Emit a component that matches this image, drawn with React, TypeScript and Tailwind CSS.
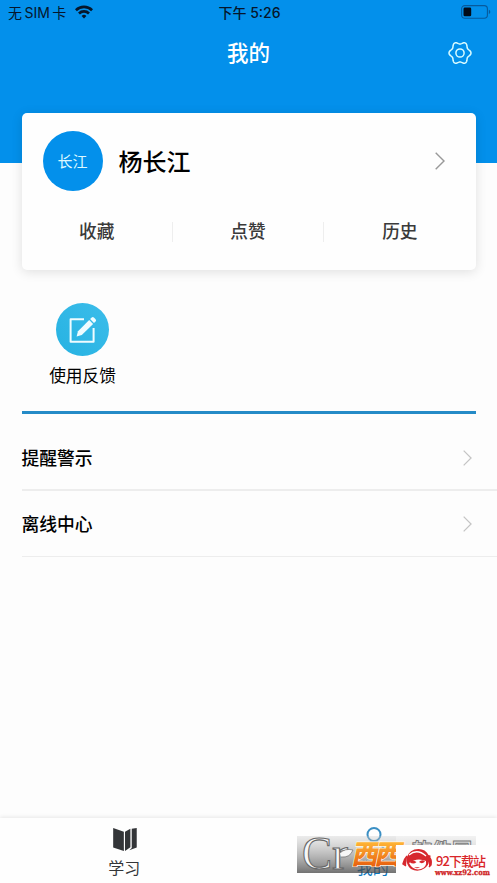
import type { ReactNode } from 'react'

const stats = ['收藏', '点赞', '历史']
const menu = ['提醒警示', '离线中心']

// six soft lobes round the centre of a 24px box
const gearPoints = Array.from({ length: 72 }, (_, i) => {
  const a = (i * Math.PI) / 36
  const r = 9.8 + 1.2 * Math.cos(6 * a)
  return `${(12 + r * Math.cos(a)).toFixed(2)},${(12 + r * Math.sin(a) * 1.04).toFixed(2)}`
}).join(' ')

function Chevron({ className }: { className: string }) {
  return (
    <svg viewBox="0 0 10 18" fill="none" stroke="currentColor" strokeWidth="1.4" className={className}>
      <path d="M0.7 0.7 9 9 0.7 17.3" />
    </svg>
  )
}

function WifiIcon() {
  return (
    <svg viewBox="0 0 18 14" className="ml-[9px] h-3.5 w-[18px]" fill="none" stroke="#06162b" strokeWidth="2.7">
      <path d="M0.9 5.2a11.5 11.5 0 0 1 16.2 0" />
      <path d="M4 8.5a7.1 7.1 0 0 1 10 0" />
      <path d="M9 13.4 6.6 11a3.4 3.4 0 0 1 4.8 0z" fill="#06162b" stroke="none" />
    </svg>
  )
}

function BatteryIcon() {
  return (
    <svg viewBox="0 0 30 14" className="h-3.5 w-[30px]">
      <rect x="0.6" y="0.6" width="25.8" height="12.6" rx="3.2" fill="none" stroke="#075a9c" strokeWidth="1.1" />
      <rect x="2.5" y="2.5" width="7.7" height="8.8" rx="1.4" fill="#020b18" />
      <path d="M27.8 4.8q1.5 .6 1.5 2.1t-1.5 2.1z" fill="#075a9c" />
    </svg>
  )
}

function GearIcon() {
  return (
    <svg viewBox="0 0 24 24" className="size-6" fill="none" stroke="#d9fbff" strokeWidth="1.5" strokeLinejoin="round">
      <polygon points={gearPoints} />
      <circle cx="12" cy="12" r="4.1" />
    </svg>
  )
}

function EditIcon() {
  return (
    <svg viewBox="0 0 28 28" className="size-7" fill="none" stroke="#effcff">
      <path d="M15 3.2H1.6v22.6H24.6V12" strokeWidth="2" strokeLinejoin="round" />
      <path d="M7.6 20.4 9 15.2 20.2 4l3.9 3.9-11.3 11.2z" fill="#effcff" stroke="none" />
      <path d="M21.1 3.1 22.7 1.5q1-1 2.2 0l1.7 1.7q1 1.2 0 2.2L25 7z" fill="#effcff" stroke="none" />
    </svg>
  )
}

function BookIcon() {
  return (
    <svg viewBox="0 0 26 26" className="ml-0.5 h-[25px] w-[26px]" fill="#333538">
      <path d="M0.7 1 11.8 5v20L0.7 21.2z" />
      <path d="M13 5 18.6 1.7V21L13 25z" />
      <path d="M20 1.8 25.2 1v20.2l-7.8 2.9L20 21.8z" />
    </svg>
  )
}

function Tab({ label, children, active }: { label: string; children: ReactNode; active?: boolean }) {
  return (
    <div className={active ? 'flex flex-1 flex-col items-center text-[#0b76bd]' : 'flex flex-1 flex-col items-center text-[#333538]'}>
      <div className="flex h-8 items-end">{children}</div>
      <span className="mt-1 text-base leading-6">{label}</span>
    </div>
  )
}

function SiteBadge() {
  return (
    <svg
      viewBox="0 0 200 50"
      className="absolute right-0 bottom-0 h-[50px] w-[200px] overflow-visible"
      fontFamily="'Noto Sans CJK SC', sans-serif"
    >
      <defs>
        <linearGradient id="grey" x1="0" y1="0" x2="0" y2="1">
          <stop offset="0" stopColor="#c8c8c8" stopOpacity="0.35" />
          <stop offset="1" stopColor="#3c3c3c" stopOpacity="0.72" />
        </linearGradient>
        <linearGradient id="orange" gradientUnits="userSpaceOnUse" x1="0" y1="-22" x2="0" y2="2">
          <stop offset="0" stopColor="#ffb636" />
          <stop offset="1" stopColor="#e8600f" />
        </linearGradient>
      </defs>
      <rect x="0" y="3" width="99" height="37" fill="url(#grey)" />
      <rect x="99" y="3" width="80" height="37" fill="url(#grey)" opacity="0.65" />
      <g fontFamily="'Liberation Serif', serif" fill="#f7f7f7" stroke="#686868" strokeWidth="1.1">
        <text x="5" y="35.5" fontSize="47" textLength="30" lengthAdjust="spacingAndGlyphs">C</text>
        <text x="35" y="35.5" fontSize="46" textLength="16" lengthAdjust="spacingAndGlyphs">r</text>
      </g>
      <path d="M43 20q5-5 13-3-3 8-12 7" fill="#f7f7f7" stroke="#686868" strokeWidth="0.7" />
      <g transform="translate(54 31) skewX(-12)" fontSize="27" fontWeight="900">
        <text x="0" y="0" fill="url(#orange)" stroke="#fff6e4" strokeWidth="1.3" paintOrder="stroke" textLength="50">西西</text>
      </g>
      <text x="115" y="24.5" fontSize="20" fontWeight="700" fill="#e4e4e4" stroke="#777" strokeWidth="0.9" textLength="60">软件园</text>
      <rect x="99" y="12" width="101" height="38" fill="#fffefe" />
      <g fill="#d7282e">
        <path d="M109.5 25q3-9 12-9 7 0 10 6l2 .5v2l-1.5.5q1 6-4 10-7 5-14 1-5-4-4.5-11z" />
        <path d="M110 23q-3 3-4 8l3 2M132 24q3 2 2 8l-2 2" stroke="#d7282e" strokeWidth="1.5" />
      </g>
      <path d="M112 30q8-6 17-2 1 6-5 8-8 2-12-6z" fill="#fff" />
      <path d="M112.5 29q3-3 7 0-3 3-7 0zM122 29q3-3 6-.5-3 3-6 .5zM117 34.5q4 1.5 6-.5" fill="#d7282e" />
      <path d="M112 22q8-7 17 1" fill="none" stroke="#fff" strokeWidth="1.3" />
      <text x="139" y="32.5" fontSize="13" fontWeight="500" fill="#d92529" textLength="50">92下载站</text>
      <text x="138" y="42" fontFamily="'DejaVu Serif', serif" fontSize="7.5" fontWeight="700" fill="#cf1f24" stroke="#cf1f24" strokeWidth="0.3" textLength="55" lengthAdjust="spacingAndGlyphs">www.xz92.com</text>
    </svg>
  )
}

export default function App() {
  return (
    <div className="relative flex h-[883px] w-[497px] flex-col overflow-hidden bg-[#fdfdfd] font-['Inter','Noto_Sans_CJK_SC',sans-serif] text-black">
      <header className="h-[163px] shrink-0 bg-[#0390eb]">
        <div className="grid h-6 grid-cols-3 items-center pr-1.5 pl-2 text-[14px] text-[#06162b]">
          <div className="flex items-center">
            <span className="text-[14px] [word-spacing:-1.5px]">无 SIM 卡</span>
            <WifiIcon />
          </div>
          <div className="text-center font-medium">下午 5:26</div>
          <div className="flex justify-end">
            <BatteryIcon />
          </div>
        </div>
        <div className="grid h-[58px] grid-cols-3 items-center pr-[25px] pl-[25px]">
          <h1 className="col-start-2 text-center text-[21.5px] font-medium text-white">我的</h1>
          <div className="flex justify-end">
            <GearIcon />
          </div>
        </div>
      </header>

      <section className="z-10 mx-[21.5px] -mt-[50px] h-[157px] shrink-0 rounded-[5px] bg-[#fefefe] shadow-[0_2px_12px_rgba(0,0,0,0.12)]">
        <div className="flex items-center pt-[18px] pr-[31px] pl-[21px]">
          <div className="flex size-[60px] items-center justify-center rounded-full bg-[#0390eb] pt-0.5 text-[15px] text-[#dcf8ff]">
            长江
          </div>
          <h2 className="ml-4 flex-1 pt-[3px] text-[24px] font-medium">杨长江</h2>
          <Chevron className="h-[18px] w-2.5 text-[#999]" />
        </div>
        <div className="mt-[27px] grid grid-cols-3 text-center text-[17.7px] leading-[28px] font-medium text-[#3a3a3a]">
          {stats.map((label, i) => (
            <div key={label} className="flex items-center">
              <span className="flex-1">{label}</span>
              {i < 2 && <span className="h-5 w-px bg-[#eeeeee]" />}
            </div>
          ))}
        </div>
      </section>

      <section className="mx-[21.5px] flex h-[144px] shrink-0 items-start border-b-3 border-[#258bc7] pt-[33px]">
        <div className="flex w-[122px] flex-col items-center">
          <div className="flex size-[53px] items-center justify-center rounded-full bg-linear-to-tr from-[#25b2e2] to-[#3bbdea]">
            <EditIcon />
          </div>
          <span className="mt-[7px] text-[16.7px] leading-[26px]">使用反馈</span>
        </div>
      </section>

      <ul className="pl-[21.5px]">
        {menu.map((label) => (
          <li
            key={label}
            className="flex h-[66px] items-center justify-between border-b border-[#ededed] pr-[25px] first:h-[77px] first:border-b-2 first:pt-3"
          >
            <span className="pt-[3px] text-[17.8px] font-medium">{label}</span>
            <Chevron className="h-4 w-[9px] text-[#c4c4c4]" />
          </li>
        ))}
      </ul>

      <nav className="mt-auto flex h-[65px] shrink-0 bg-[#fefefe] pt-0.5 shadow-[0_-1px_4px_rgba(0,0,0,0.09)]">
        <Tab label="学习">
          <BookIcon />
        </Tab>
        <Tab label="我的" active>
          <svg viewBox="0 0 26 26" className="ml-0.5 size-[26px]" fill="none" stroke="#3a8fc4">
            <circle cx="13" cy="8.5" r="6.5" strokeWidth="2" />
            <path d="M3 25q2-9 10-9t10 9" strokeWidth="2" />
          </svg>
        </Tab>
      </nav>
      <SiteBadge />
    </div>
  )
}
